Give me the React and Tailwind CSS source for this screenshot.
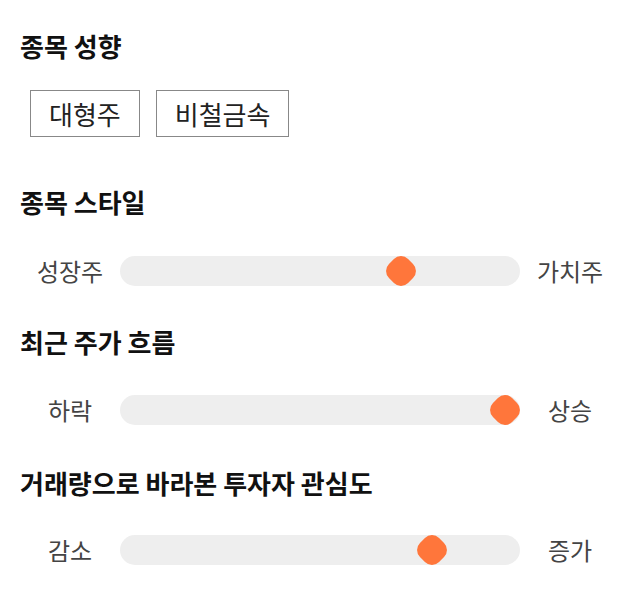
import React from "react";

const font = { fontFamily: '"Noto Sans CJK KR", "Noto Sans", sans-serif' };

function Slider({ left, right, value }) {
  return (
    <div className="flex h-[30px] items-center">
      <div className="w-[100px] text-center text-[24px] leading-[30px] text-[#444]">{left}</div>
      <div className="relative h-[30px] w-[400px] rounded-full bg-[#eeeeee]">
        <div
          className="absolute top-1/2 h-[27px] w-[27px] -translate-x-1/2 -translate-y-1/2 rotate-45 rounded-[10px] bg-[#ff763b]"
          style={{ left: `${value}%` }}
        />
      </div>
      <div className="w-[100px] text-center text-[24px] leading-[30px] text-[#444]">{right}</div>
    </div>
  );
}

export default function App() {
  return (
    <div className="bg-white px-5 pt-[30px] pb-10 w-[640px] h-[606px]" style={font}>
      <h2 className="text-[26px] font-bold leading-[32px] text-[#111]">종목 성향</h2>
      <div className="mt-[28px] flex gap-[16px] pl-[10px]">
        <div className="flex h-[47px] items-center border border-[#888] px-[18px] text-[26px] text-[#222]">대형주</div>
        <div className="flex h-[47px] items-center border border-[#888] px-[18px] text-[26px] text-[#222]">비철금속</div>
      </div>
      <h2 className="mt-[49px] text-[26px] font-bold leading-[32px] text-[#111]">종목 스타일</h2>
      <div className="mt-[38px]">
        <Slider left="성장주" right="가치주" value={70.25} />
      </div>
      <h2 className="mt-[40px] text-[26px] font-bold leading-[32px] text-[#111]">최근 주가 흐름</h2>
      <div className="mt-[37px]">
        <Slider left="하락" right="상승" value={96.25} />
      </div>
      <h2 className="mt-[42px] text-[26px] font-bold leading-[32px] text-[#111]">거래량으로 바라본 투자자 관심도</h2>
      <div className="mt-[36px]">
        <Slider left="감소" right="증가" value={78} />
      </div>
    </div>
  );
}
